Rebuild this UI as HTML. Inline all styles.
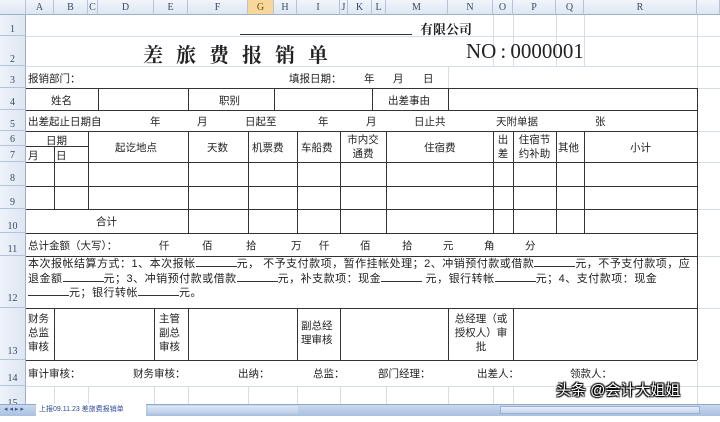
<!DOCTYPE html>
<html><head><meta charset="utf-8"><style>
*{margin:0;padding:0;box-sizing:border-box}
body{width:720px;height:416px;overflow:hidden;background:#fff;position:relative;font-family:"Liberation Sans","Noto Sans CJK SC",sans-serif;font-size:10.5px;color:#222}
.a{position:absolute;white-space:nowrap}
.g{position:absolute;background:#d5dde9}
.b{position:absolute;background:#333}
.ch{position:absolute;top:0;height:15px;background:linear-gradient(#f1f5fb,#dde6f2);border-right:1px solid #b4c3d8;border-bottom:1px solid #9eb1cc;text-align:center;font-family:"Liberation Serif",serif;font-size:10px;line-height:15px;color:#3a4a66}
.rh{position:absolute;left:0;width:26px;background:linear-gradient(90deg,#eef3fa,#dde6f2);border-right:1px solid #9eb1cc;border-bottom:1px solid #b4c3d8;font-family:"Liberation Serif",serif;font-size:10px;color:#3a4a66;text-align:center}
.c{text-align:center}
.u{display:inline-block;width:41px;border-bottom:1px solid #333;height:10px;vertical-align:baseline}
</style></head><body>
<div class="ch" style="left:0;width:26px"></div>
<div class="ch" style="left:26px;width:28px">A</div>
<div class="ch" style="left:54px;width:34px">B</div>
<div class="ch" style="left:88px;width:10px">C</div>
<div class="ch" style="left:98px;width:56px">D</div>
<div class="ch" style="left:154px;width:34px">E</div>
<div class="ch" style="left:188px;width:60px">F</div>
<div class="ch" style="left:248px;width:26px;background:#f8d89a;color:#6a4a10">G</div>
<div class="ch" style="left:274px;width:23px">H</div>
<div class="ch" style="left:297px;width:43px">I</div>
<div class="ch" style="left:340px;width:8px">J</div>
<div class="ch" style="left:348px;width:24px">K</div>
<div class="ch" style="left:372px;width:14px">L</div>
<div class="ch" style="left:386px;width:62px">M</div>
<div class="ch" style="left:448px;width:45px">N</div>
<div class="ch" style="left:493px;width:20px">O</div>
<div class="ch" style="left:513px;width:43px">P</div>
<div class="ch" style="left:556px;width:28px">Q</div>
<div class="ch" style="left:584px;width:113px">R</div>
<div class="ch" style="left:697px;width:23px"></div>
<div class="rh" style="top:15px;height:21px;line-height:30px">1</div>
<div class="rh" style="top:36px;height:30px;line-height:48px">2</div>
<div class="rh" style="top:66px;height:22px;line-height:30px">3</div>
<div class="rh" style="top:88px;height:22px;line-height:30px">4</div>
<div class="rh" style="top:110px;height:21px;line-height:30px">5</div>
<div class="rh" style="top:131px;height:15px;line-height:18px">6</div>
<div class="rh" style="top:146px;height:16px;line-height:20px">7</div>
<div class="rh" style="top:162px;height:24px;line-height:34px">8</div>
<div class="rh" style="top:186px;height:23px;line-height:34px">9</div>
<div class="rh" style="top:209px;height:24px;line-height:36px">10</div>
<div class="rh" style="top:233px;height:23px;line-height:34px">11</div>
<div class="rh" style="top:256px;height:52px;line-height:86px">12</div>
<div class="rh" style="top:308px;height:52px;line-height:88px">13</div>
<div class="rh" style="top:360px;height:26px;line-height:38px">14</div>
<div class="rh" style="top:386px;height:20px;line-height:36px">15</div>
<div class="g" style="left:697px;top:15px;width:1px;height:390px"></div>
<div class="g" style="left:584px;top:15px;width:1px;height:51px"></div>
<div class="g" style="left:556px;top:15px;width:1px;height:51px"></div>
<div class="g" style="left:513px;top:15px;width:1px;height:51px"></div>
<div class="g" style="left:493px;top:15px;width:1px;height:51px"></div>
<div class="g" style="left:448px;top:66px;width:1px;height:22px"></div>
<div class="g" style="left:26px;top:36px;width:694px;height:1px"></div>
<div class="g" style="left:26px;top:66px;width:694px;height:1px"></div>
<div class="g" style="left:697px;top:88px;width:23px;height:1px"></div>
<div class="g" style="left:697px;top:131px;width:23px;height:1px"></div>
<div class="g" style="left:697px;top:162px;width:23px;height:1px"></div>
<div class="g" style="left:697px;top:209px;width:23px;height:1px"></div>
<div class="g" style="left:697px;top:256px;width:23px;height:1px"></div>
<div class="g" style="left:697px;top:308px;width:23px;height:1px"></div>
<div class="g" style="left:26px;top:386px;width:694px;height:1px"></div>
<div class="g" style="left:54px;top:386px;width:1px;height:18px"></div>
<div class="g" style="left:88px;top:386px;width:1px;height:18px"></div>
<div class="g" style="left:154px;top:386px;width:1px;height:18px"></div>
<div class="g" style="left:188px;top:386px;width:1px;height:18px"></div>
<div class="g" style="left:248px;top:386px;width:1px;height:18px"></div>
<div class="g" style="left:297px;top:386px;width:1px;height:18px"></div>
<div class="g" style="left:340px;top:386px;width:1px;height:18px"></div>
<div class="g" style="left:386px;top:386px;width:1px;height:18px"></div>
<div class="g" style="left:448px;top:386px;width:1px;height:18px"></div>
<div class="g" style="left:493px;top:386px;width:1px;height:18px"></div>
<div class="g" style="left:513px;top:386px;width:1px;height:18px"></div>
<div class="b" style="left:240px;top:34px;width:172px;height:1px"></div>
<div class="b" style="left:26px;top:88px;width:671px;height:1px"></div>
<div class="b" style="left:26px;top:110px;width:671px;height:1px"></div>
<div class="b" style="left:26px;top:131px;width:671px;height:1px"></div>
<div class="b" style="left:26px;top:146px;width:62px;height:1px"></div>
<div class="b" style="left:26px;top:162px;width:671px;height:1px"></div>
<div class="b" style="left:26px;top:186px;width:671px;height:1px"></div>
<div class="b" style="left:26px;top:209px;width:671px;height:1px"></div>
<div class="b" style="left:26px;top:233px;width:671px;height:1px"></div>
<div class="b" style="left:26px;top:256px;width:671px;height:1px"></div>
<div class="b" style="left:26px;top:308px;width:671px;height:1px"></div>
<div class="b" style="left:26px;top:360px;width:671px;height:1px"></div>
<div class="b" style="left:697px;top:88px;width:1px;height:272px"></div>
<div class="b" style="left:98px;top:88px;width:1px;height:22px"></div>
<div class="b" style="left:188px;top:88px;width:1px;height:22px"></div>
<div class="b" style="left:274px;top:88px;width:1px;height:22px"></div>
<div class="b" style="left:372px;top:88px;width:1px;height:22px"></div>
<div class="b" style="left:448px;top:88px;width:1px;height:22px"></div>
<div class="b" style="left:54px;top:146px;width:1px;height:63px"></div>
<div class="b" style="left:88px;top:131px;width:1px;height:78px"></div>
<div class="b" style="left:188px;top:131px;width:1px;height:102px"></div>
<div class="b" style="left:248px;top:131px;width:1px;height:102px"></div>
<div class="b" style="left:297px;top:131px;width:1px;height:102px"></div>
<div class="b" style="left:340px;top:131px;width:1px;height:102px"></div>
<div class="b" style="left:386px;top:131px;width:1px;height:102px"></div>
<div class="b" style="left:493px;top:131px;width:1px;height:102px"></div>
<div class="b" style="left:513px;top:131px;width:1px;height:102px"></div>
<div class="b" style="left:556px;top:131px;width:1px;height:102px"></div>
<div class="b" style="left:584px;top:131px;width:1px;height:102px"></div>
<div class="b" style="left:54px;top:308px;width:1px;height:52px"></div>
<div class="b" style="left:154px;top:308px;width:1px;height:52px"></div>
<div class="b" style="left:188px;top:308px;width:1px;height:52px"></div>
<div class="b" style="left:297px;top:308px;width:1px;height:52px"></div>
<div class="b" style="left:340px;top:308px;width:1px;height:52px"></div>
<div class="b" style="left:448px;top:308px;width:1px;height:52px"></div>
<div class="b" style="left:513px;top:308px;width:1px;height:52px"></div>
<div class="a" style="left:420px;top:19px;font-size:13px;font-weight:bold;font-family:'Liberation Serif','Noto Serif CJK SC',serif">有限公司</div>
<div class="a" style="left:143px;top:39px;font-size:20px;font-weight:bold;letter-spacing:13px;font-family:'Liberation Serif','Noto Serif CJK SC',serif">差旅费报销单</div>
<div class="a" style="left:466px;top:39px;font-size:21px;font-family:'Liberation Serif','Noto Serif CJK SC',serif">NO<span style="display:inline-block;width:14px;text-align:center">:</span>0000001</div>
<div class="a" style="left:28px;top:71px">报销部门：</div>
<div class="a" style="left:289px;top:71px">填报日期：</div>
<div class="a" style="left:364px;top:71px">年</div>
<div class="a" style="left:393px;top:71px">月</div>
<div class="a" style="left:423px;top:71px">日</div>
<div class="a" style="left:51px;top:93px">姓名</div>
<div class="a" style="left:219px;top:93px">职别</div>
<div class="a" style="left:388px;top:93px">出差事由</div>
<div class="a" style="left:28px;top:114px">出差起止日期自</div>
<div class="a" style="left:150px;top:114px">年</div>
<div class="a" style="left:197px;top:114px">月</div>
<div class="a" style="left:245px;top:114px">日起至</div>
<div class="a" style="left:318px;top:114px">年</div>
<div class="a" style="left:366px;top:114px">月</div>
<div class="a" style="left:414px;top:114px">日止共</div>
<div class="a" style="left:496px;top:114px">天附单据</div>
<div class="a" style="left:595px;top:114px">张</div>
<div class="a" style="left:46px;top:133px">日期</div>
<div class="a" style="left:28px;top:148px">月</div>
<div class="a" style="left:56px;top:148px">日</div>
<div class="a" style="left:115px;top:140px">起讫地点</div>
<div class="a" style="left:207px;top:140px">天数</div>
<div class="a" style="left:252px;top:140px">机票费</div>
<div class="a" style="left:301px;top:140px">车船费</div>
<div class="a c" style="left:340px;top:133px;width:46px;line-height:14px">市内交<br>通费</div>
<div class="a" style="left:424px;top:140px">住宿费</div>
<div class="a c" style="left:493px;top:133px;width:20px;line-height:14px">出<br>差</div>
<div class="a c" style="left:513px;top:133px;width:43px;line-height:14px">住宿节<br>约补助</div>
<div class="a" style="left:558px;top:140px">其他</div>
<div class="a" style="left:630px;top:140px">小计</div>
<div class="a" style="left:96px;top:214px">合计</div>
<div class="a" style="left:28px;top:238px">总计金额（大写）：</div>
<div class="a" style="left:159px;top:238px">仟</div>
<div class="a" style="left:202px;top:238px">佰</div>
<div class="a" style="left:246px;top:238px">拾</div>
<div class="a" style="left:291px;top:238px">万</div>
<div class="a" style="left:319px;top:238px">仟</div>
<div class="a" style="left:360px;top:238px">佰</div>
<div class="a" style="left:402px;top:238px">拾</div>
<div class="a" style="left:443px;top:238px">元</div>
<div class="a" style="left:484px;top:238px">角</div>
<div class="a" style="left:525px;top:238px">分</div>
<div class="a" style="left:28px;top:257px;line-height:14.5px;font-size:11px;letter-spacing:0.5px">本次报帐结算方式：1、本次报帐<span class="u"></span>元， 不予支付款项，暂作挂帐处理；2、冲销预付款或借款<span class="u"></span>元，不予支付款项，应<br>退金额<span class="u"></span>元；3、冲销预付款或借款<span class="u"></span>元，补支款项：现金<span class="u"></span> 元，银行转帐<span class="u"></span>元；4、支付款项：现金<br><span class="u"></span>元；银行转帐<span class="u"></span>元。</div>
<div class="a" style="left:28px;top:312px;line-height:14px">财务<br>总监<br>审核</div>
<div class="a" style="left:159px;top:312px;line-height:14px">主管<br>副总<br>审核</div>
<div class="a" style="left:301px;top:319px;line-height:14px">副总经<br>理审核</div>
<div class="a c" style="left:449px;top:312px;width:64px;line-height:14px">总经理（或<br>授权人）审<br>批</div>
<div class="a" style="left:28px;top:366px">审计审核：</div>
<div class="a" style="left:133px;top:366px">财务审核：</div>
<div class="a" style="left:238px;top:366px">出纳：</div>
<div class="a" style="left:313px;top:366px">总监：</div>
<div class="a" style="left:378px;top:366px">部门经理：</div>
<div class="a" style="left:477px;top:366px">出差人：</div>
<div class="a" style="left:570px;top:366px">领款人：</div>
<div class="a" style="left:556px;top:379px;font-size:15px;color:#fff;text-shadow:0 0 1px #000,1px 1px 1px #000,-1px -1px 1px #000,1px -1px 1px #000,-1px 1px 1px #000">头条 @会计大姐姐</div>
<div class="a" style="left:0;top:404px;width:720px;height:12px;background:linear-gradient(#c9d8ee,#a9c0e0);border-top:1px solid #8fa8cc"></div>
<div class="a" style="left:4px;top:405px;font-size:7px;color:#3a5a90">◂ ◂ ▸ ▸</div>
<div class="a" style="left:36px;top:404px;width:110px;height:12px;background:#fff;font-size:7px;color:#2a4a9a;line-height:11px;padding-left:3px">上报09.11.23 差旅费报销单</div>
<div class="a" style="left:148px;top:406px;width:150px;height:8px;background:linear-gradient(#dce7f6,#b8cbe6)"></div>
<div class="a" style="left:500px;top:406px;width:200px;height:8px;background:linear-gradient(#e6eef9,#c4d4ea);border:1px solid #9ab0d0"></div>
</body></html>
